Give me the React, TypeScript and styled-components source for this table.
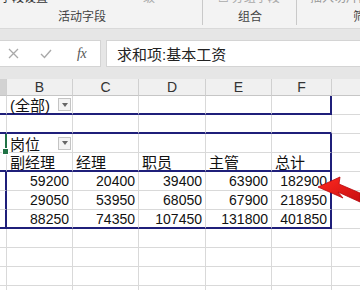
import React from "react";
import styled, { createGlobalStyle, css } from "styled-components";

const Global = createGlobalStyle`
  html, body { margin: 0; padding: 0; background: #e6e6e6; }
  body { font-family: "Liberation Sans", "Noto Sans CJK SC", sans-serif; overflow: hidden; }
`;

const Page = styled.div`
  width: 360px;
  height: 290px;
  overflow: hidden;
  display: flex;
  flex-direction: column;
  background: #e6e6e6;
  position: relative;
`;

/* ---------- Ribbon ---------- */
const Ribbon = styled.div`
  height: 29px;
  flex: none;
  background: #f3f3f3;
  border-bottom: 1px solid #d9d9d9;
  box-sizing: border-box;
  display: flex;
  font-size: 12px;
  font-family: "Noto Sans CJK SC", sans-serif;
  overflow: hidden;
`;

const Group = styled.div<{ $w: number; $pad: number; $sep?: boolean }>`
  width: ${(p) => p.$w}px;
  flex: none;
  display: flex;
  flex-direction: column;
  justify-content: space-between;
  padding-left: ${(p) => p.$pad}px;
  box-sizing: border-box;
  height: 28px;
  ${(p) =>
    p.$sep &&
    css`
      border-right: 1px solid #c9c9c9;
      height: 25px;
    `}
`;

const GroupFlex = styled.div`
  display: flex;
  align-items: flex-start;
`;

const Fragment = styled.div<{ $color: string }>`
  height: 4px;
  overflow: hidden;
  color: ${(p) => p.$color};
  line-height: 12px;
  white-space: nowrap;
  & > span {
    display: block;
    margin-top: -9px;
  }
`;

const GroupLabel = styled.div`
  color: #444;
  line-height: 14px;
  margin-bottom: 2px;
  white-space: nowrap;
`;

/* ---------- Formula bar ---------- */
const Spacer = styled.div<{ $h: number }>`
  height: ${(p) => p.$h}px;
  flex: none;
`;

const FormulaBar = styled.div`
  height: 27px;
  flex: none;
  display: flex;
  gap: 5px;
`;

const Buttons = styled.div`
  width: 101px;
  flex: none;
  background: #fff;
  border: 1px solid #d4d4d4;
  border-left: none;
  box-sizing: border-box;
  display: flex;
  align-items: center;
  padding-left: 8px;
  gap: 0;
`;

const IconSlot = styled.div<{ $w: number }>`
  width: ${(p) => p.$w}px;
  display: flex;
  align-items: center;
`;

const Fx = styled.span`
  font-family: "Liberation Serif", serif;
  font-style: italic;
  font-size: 14px;
  color: #555;
  letter-spacing: -0.5px;
`;

const Input = styled.div`
  flex: 1;
  background: #fff;
  border: 1px solid #d4d4d4;
  border-right: none;
  box-sizing: border-box;
  display: flex;
  align-items: center;
  padding-left: 10px;
  font-size: 15px;
  color: #222;
  font-family: "Liberation Sans", "Noto Sans CJK SC", sans-serif;
`;

/* ---------- Sheet ---------- */
const Sheet = styled.div`
  flex: 1;
  display: grid;
  grid-template-columns: 7px 66px 66px 67px 66px 60px 1fr;
  grid-template-rows: 17px;
  grid-auto-rows: 19px;
  background: #fff;
`;

const HeadCell = styled.div<{ $active?: boolean; $last?: boolean }>`
  background: ${(p) => (p.$active ? "#d2d2d2" : "#f0f0f0")};
  border-right: ${(p) => (p.$last ? "none" : "1px solid #d0d0d0")};
  border-bottom: 1px solid #c6c6c6;
  box-sizing: border-box;
  display: flex;
  align-items: center;
  justify-content: center;
  font-size: 14px;
  color: #333;
`;

type Line = "thick" | "green" | "grid" | "none";

const lineCss = (l: Line) =>
  l === "thick"
    ? "2px solid #1f1f7a"
    : l === "green"
    ? "2px solid #217346"
    : l === "grid"
    ? "1px solid #d9d9d9"
    : "none";

const Cell = styled.div<{ $b: Line; $r: Line; $align: "left" | "right"; $cjk?: boolean }>`
  position: relative;
  box-sizing: border-box;
  border-bottom: ${(p) => lineCss(p.$b)};
  border-right: ${(p) => lineCss(p.$r)};
  display: flex;
  align-items: center;
  justify-content: ${(p) => (p.$align === "right" ? "flex-end" : "space-between")};
  padding: 0 ${(p) => (p.$align === "right" ? "3px" : "0")} 0 3px;
  font-size: ${(p) => (p.$cjk ? "15px" : "14px")};
  color: #111;
  white-space: nowrap;
  overflow: visible;
`;

const FilterBtn = styled.div`
  width: 13px;
  height: 13px;
  margin-right: 1px;
  box-sizing: border-box;
  border: 1px solid #c4c4c4;
  background: #f3f3f3;
  display: flex;
  align-items: center;
  justify-content: center;
  &::after {
    content: "";
    border-left: 3px solid transparent;
    border-right: 3px solid transparent;
    border-top: 4px solid #666;
  }
`;

const FillHandle = styled.div`
  position: absolute;
  right: -4px;
  bottom: -3px;
  width: 5px;
  height: 5px;
  background: #217346;
  border: 1px solid #fff;
  z-index: 2;
`;

const Arrow = styled.svg`
  position: absolute;
  left: 312px;
  top: 170px;
  width: 48px;
  height: 42px;
  z-index: 3;
`;

type CellSpec = {
  text?: string;
  cjk?: boolean;
  align?: "left" | "right";
  filter?: boolean;
};

const COLS = ["", "B", "C", "D", "E", "F", ""];

const rows: { cells: CellSpec[]; bottom: Line; aRight: Line; fRight: Line; handle?: boolean }[] = [
  {
    cells: [{}, { text: "(全部)", cjk: true, filter: true }, {}, {}, {}, {}, {}],
    bottom: "thick",
    aRight: "grid",
    fRight: "thick",
  },
  { cells: [{}, {}, {}, {}, {}, {}, {}], bottom: "thick", aRight: "grid", fRight: "grid" },
  {
    cells: [{}, { text: "岗位", cjk: true, filter: true }, {}, {}, {}, {}, {}],
    bottom: "grid",
    aRight: "green",
    fRight: "thick",
    handle: true,
  },
  {
    cells: [
      {},
      { text: "副经理", cjk: true },
      { text: "经理", cjk: true },
      { text: "职员", cjk: true },
      { text: "主管", cjk: true },
      { text: "总计", cjk: true },
      {},
    ],
    bottom: "thick",
    aRight: "grid",
    fRight: "thick",
  },
  {
    cells: [{}, ...["59200", "20400", "39400", "63900", "182900"].map((t) => ({ text: t, align: "right" as const })), {}],
    bottom: "grid",
    aRight: "thick",
    fRight: "thick",
  },
  {
    cells: [{}, ...["29050", "53950", "68050", "67900", "218950"].map((t) => ({ text: t, align: "right" as const })), {}],
    bottom: "grid",
    aRight: "thick",
    fRight: "thick",
  },
  {
    cells: [{}, ...["88250", "74350", "107450", "131800", "401850"].map((t) => ({ text: t, align: "right" as const })), {}],
    bottom: "thick",
    aRight: "thick",
    fRight: "thick",
  },
  ...[0, 1, 2, 3].map(() => ({
    cells: [{}, {}, {}, {}, {}, {}, {}] as CellSpec[],
    bottom: "grid" as Line,
    aRight: "grid" as Line,
    fRight: "grid" as Line,
  })),
];

const XIcon = () => (
  <svg width="11" height="11" viewBox="0 0 11 11">
    <path d="M1 1 L10 10 M10 1 L1 10" stroke="#a9a9a9" strokeWidth="1.3" />
  </svg>
);

const CheckIcon = () => (
  <svg width="12" height="10" viewBox="0 0 12 10">
    <path d="M1 5 L4.5 8.5 L11 1" stroke="#a9a9a9" strokeWidth="1.4" fill="none" />
  </svg>
);

export default function App() {
  return (
    <>
      <Global />
      <Page>
        <Ribbon>
          <Group $w={203} $pad={0} $sep>
            <GroupFlex>
              <Fragment $color="#333" style={{ width: 143 }}>
                <span>字段设置</span>
              </Fragment>
              <Fragment $color="#aaa">
                <span>级</span>
              </Fragment>
            </GroupFlex>
            <GroupLabel style={{ paddingLeft: 58 }}>活动字段</GroupLabel>
          </Group>
          <Group $w={94} $pad={15} $sep>
            <Fragment $color="#aaa">
              <span>☐ 分组字段</span>
            </Fragment>
            <GroupLabel style={{ paddingLeft: 20 }}>组合</GroupLabel>
          </Group>
          <Group $w={70} $pad={13}>
            <Fragment $color="#999">
              <span>插入切片器</span>
            </Fragment>
            <GroupLabel style={{ paddingLeft: 43, marginBottom: 5 }}>筛</GroupLabel>
          </Group>
        </Ribbon>
        <Spacer $h={11} />
        <FormulaBar>
          <Buttons>
            <IconSlot $w={32}>
              <XIcon />
            </IconSlot>
            <IconSlot $w={37}>
              <CheckIcon />
            </IconSlot>
            <IconSlot $w={16}>
              <Fx>fx</Fx>
            </IconSlot>
          </Buttons>
          <Input>求和项:基本工资</Input>
        </FormulaBar>
        <Spacer $h={12} />
        <Sheet>
          {COLS.map((c, i) => (
            <HeadCell key={"h" + i} $active={i === 0} $last={i === 6}>
              {c}
            </HeadCell>
          ))}
          {rows.map((row, ri) =>
            row.cells.map((cell, ci) => {
              const bottom: Line = ci === 6 ? "grid" : row.bottom;
              const right: Line =
                ci === 0 ? row.aRight : ci === 5 ? row.fRight : ci === 6 ? "none" : "grid";
              return (
                <Cell
                  key={`${ri}-${ci}`}
                  $b={bottom}
                  $r={right}
                  $align={cell.align ?? "left"}
                  $cjk={cell.cjk}
                >
                  {cell.text && <span>{cell.text}</span>}
                  {cell.filter && <FilterBtn />}
                  {ci === 0 && row.handle && <FillHandle />}
                </Cell>
              );
            })
          )}
        </Sheet>
        <Arrow viewBox="0 0 48 42">
          <defs>
            <linearGradient id="ag" x1="0" y1="0" x2="1" y2="1">
              <stop offset="0" stopColor="#ff2a20" />
              <stop offset="1" stopColor="#c80d10" />
            </linearGradient>
          </defs>
          <polygon
            points="6,17 28,7 27,14 48,23 48,32 26,22 31,28"
            fill="url(#ag)"
            stroke="#b5080c"
            strokeWidth="0.8"
            strokeLinejoin="round"
          />
        </Arrow>
      </Page>
    </>
  );
}
